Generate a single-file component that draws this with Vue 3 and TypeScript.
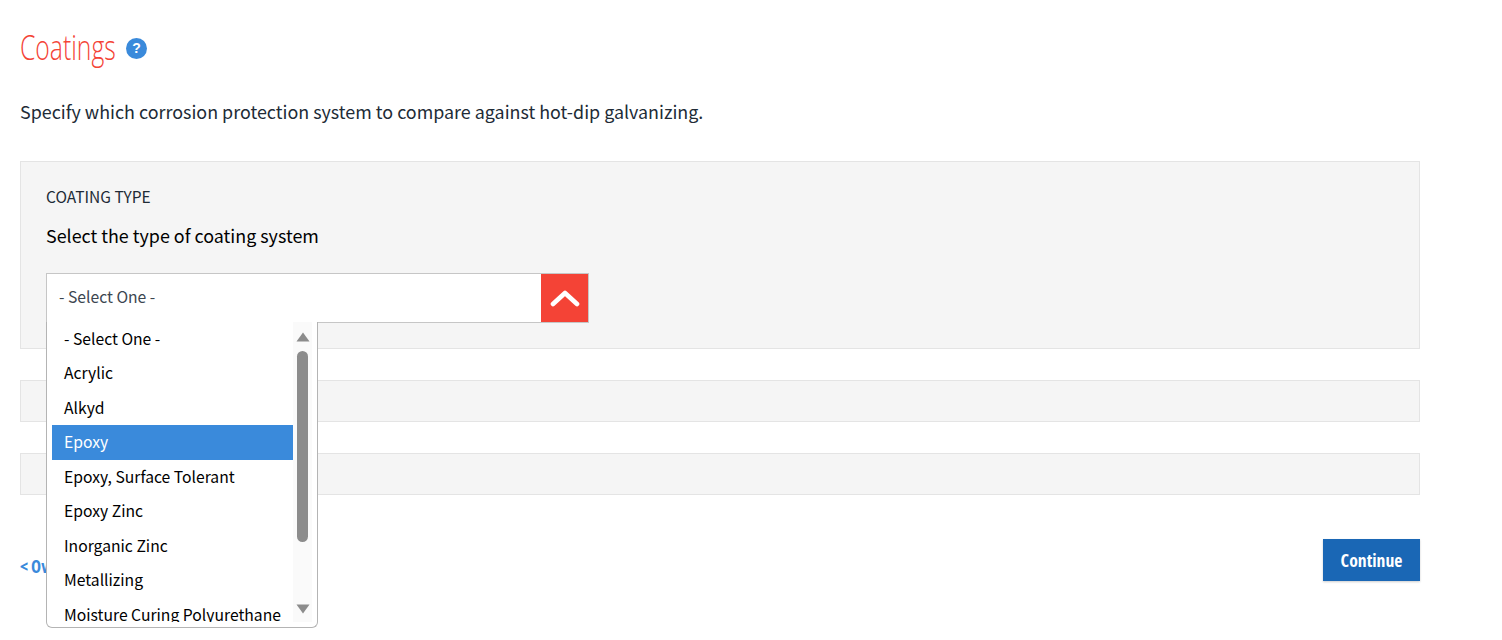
<script setup lang="ts">
const options = [
  '- Select One -',
  'Acrylic',
  'Alkyd',
  'Epoxy',
  'Epoxy, Surface Tolerant',
  'Epoxy Zinc',
  'Inorganic Zinc',
  'Metallizing',
  'Moisture Curing Polyurethane',
]
const selected = 'Epoxy'
</script>

<template>
  <main class="page">
    <header class="title-row">
      <h1 class="title">Coatings</h1>
      <span class="help">?</span>
    </header>
    <p class="intro">Specify which corrosion protection system to compare against hot-dip galvanizing.</p>

    <section class="panel panel-open">
      <div class="panel-label">COATING TYPE</div>
      <div class="panel-question">Select the type of coating system</div>
      <div class="select">
        <div class="select-box">
          <span class="select-value">- Select One -</span>
          <span class="select-toggle">
            <svg width="30" height="18" viewBox="0 0 30 18" fill="none">
              <path d="M3 15 L15 4 L27 15" stroke="#fff" stroke-width="4.6" stroke-linecap="round" stroke-linejoin="round" />
            </svg>
          </span>
        </div>
        <div class="menu">
          <ul class="menu-list">
            <li v-for="opt in options" :key="opt" class="menu-item" :class="{ active: opt === selected }">{{ opt }}</li>
          </ul>
          <div class="scrollbar">
            <svg class="arrow" width="14" height="10" viewBox="0 0 14 10"><path d="M7 0.5 L13.5 9.5 H0.5 Z" fill="#8c8c8c" /></svg>
            <div class="thumb"></div>
            <svg class="arrow arrow-down" width="14" height="10" viewBox="0 0 14 10"><path d="M7 9.5 L13.5 0.5 H0.5 Z" fill="#8c8c8c" /></svg>
          </div>
        </div>
      </div>
    </section>

    <section class="panel panel-closed"></section>
    <section class="panel panel-closed"></section>

    <footer class="actions">
      <a class="back">&lt; Overview</a>
      <button class="continue">Continue</button>
    </footer>
  </main>
</template>

<style>
html,
body {
  margin: 0;
  background: #fff;
  overflow: hidden;
}
</style>

<style scoped>
.page {
  box-sizing: border-box;
  width: 1400px;
  height: 640px;
  margin-left: 20px;
  padding-top: 28px;
  font-family: "Noto Sans CJK JP", "Noto Sans", sans-serif;
  color: #212b36;
}

.title-row {
  display: flex;
  align-items: center;
  gap: 11px;
  height: 40px;
}

.title {
  position: relative;
  top: -1.5px;
  width: 95px;
  margin: 0;
  font-family: "Open Sans", sans-serif;
  font-size: 34px;
  font-weight: 300;
  line-height: 40px;
  color: #f44336;
  transform: scaleX(0.727);
  transform-origin: left center;
  white-space: nowrap;
}

.help {
  display: grid;
  place-items: center;
  width: 21px;
  height: 21px;
  border-radius: 50%;
  background: #3a8adb;
  color: #fff;
  font-family: "Liberation Sans", sans-serif;
  font-size: 14px;
  font-weight: 700;
}

.intro {
  margin: 30px 0 0;
  font-size: 17.9px;
  line-height: 26px;
  white-space: nowrap;
}

.panel {
  box-sizing: border-box;
  border: 1px solid #e4e4e4;
  background: #f5f5f5;
}

.panel-open {
  height: 188px;
  margin-top: 37px;
  padding: 23px 25px 0;
}

.panel-label {
  font-size: 15.5px;
  line-height: 22px;
}

.panel-closed {
  height: 42px;
  margin-top: 31px;
}

.panel-question {
  margin-top: 16px;
  font-size: 17.9px;
  line-height: 24px;
  color: #000;
}

.select {
  position: relative;
  width: 543px;
  margin-top: 26px;
}

.select-box {
  display: flex;
  box-sizing: border-box;
  height: 50px;
  border: 1px solid #c6c6c6;
  background: #fff;
}

.select-value {
  flex: 1;
  padding-left: 12px;
  font-size: 15.7px;
  line-height: 46px;
  color: #3c4650;
}

.select-toggle {
  display: grid;
  place-items: center;
  width: 47px;
  background: #f44336;
}

.menu {
  position: absolute;
  top: 49px;
  left: 0;
  z-index: 2;
  display: flex;
  box-sizing: border-box;
  width: 272px;
  height: 306px;
  padding: 0 5px 5px;
  border: 1px solid #b4b4b4;
  border-top: 0;
  border-radius: 0 0 6px 6px;
  background: #fff;
  overflow: hidden;
}

.menu-list {
  flex: 1;
  min-width: 0;
  margin: -0.5px 0 0;
  padding: 0;
  list-style: none;
  overflow: hidden;
}

.menu-item {
  height: 34.5px;
  padding-left: 12px;
  font-size: 15.7px;
  line-height: 34.5px;
  color: #000;
  white-space: nowrap;
}

.active {
  background: #3a8adb;
  color: #fff;
}

.scrollbar {
  position: relative;
  flex: none;
  width: 19px;
  background: #fafafa;
}

.arrow {
  position: absolute;
  top: 10px;
  left: 3px;
}

.arrow-down {
  top: auto;
  bottom: 8px;
}

.thumb {
  position: absolute;
  top: 29px;
  left: 4px;
  width: 11px;
  height: 191px;
  border-radius: 6px;
  background: #8c8c8c;
}

.actions {
  display: flex;
  align-items: center;
  justify-content: space-between;
  height: 42px;
  margin-top: 44px;
}

.back {
  padding-top: 12px;
  font-family: "Open Sans", sans-serif;
  font-size: 17px;
  font-weight: 700;
  font-stretch: 75%;
  color: #3a8adb;
}

.continue {
  width: 97px;
  height: 42px;
  padding: 0;
  border: 0;
  background: #1a67b5;
  box-shadow: 0 1px 2px rgba(0, 0, 0, 0.2);
  color: #fff;
  font-family: "Open Sans", sans-serif;
  font-size: 17.7px;
  font-weight: 700;
  font-stretch: 75%;
}
</style>
